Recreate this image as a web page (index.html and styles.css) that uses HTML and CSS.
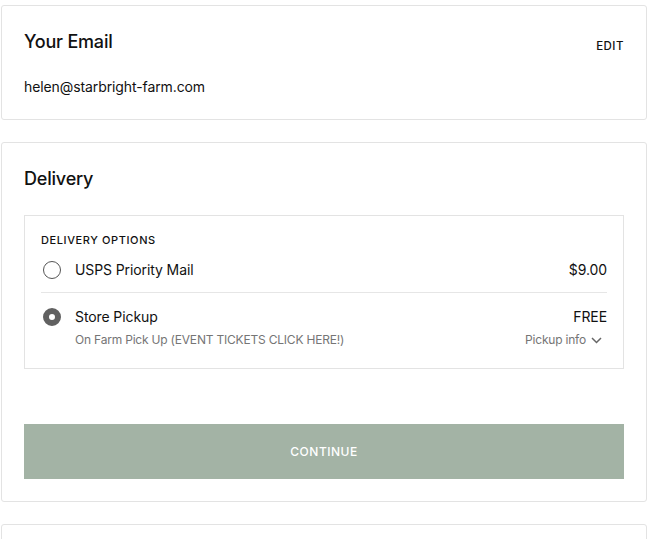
FILE: index.html
```
<!DOCTYPE html>
<html>
<head>
<meta charset="utf-8">
<link rel="stylesheet" href="styles.css">
</head>
<body>
<div class="page">
  <section class="card">
    <div class="card-head">
      <h2 class="title">Your Email</h2>
      <span class="edit">EDIT</span>
    </div>
    <p class="email">helen@starbright-farm.com</p>
  </section>

  <section class="card">
    <h2 class="title">Delivery</h2>
    <div class="options">
      <div class="options-label">DELIVERY OPTIONS</div>
      <div class="option first">
        <span class="radio"></span>
        <div class="option-body">
          <div class="option-row">
            <span class="option-name">USPS Priority Mail</span>
            <span class="option-price">$9.00</span>
          </div>
        </div>
      </div>
      <div class="option second">
        <span class="radio checked"></span>
        <div class="option-body">
          <div class="option-row">
            <span class="option-name">Store Pickup</span>
            <span class="option-price">FREE</span>
          </div>
          <div class="option-row sub">
            <span class="option-desc">On Farm Pick Up (EVENT TICKETS CLICK HERE!)</span>
            <span class="pickup-info">Pickup info
              <svg class="chev" width="11" height="7" viewBox="0 0 11 7"><path d="M1 1l4.5 4.5L10 1" fill="none" stroke="#666" stroke-width="1.5"/></svg>
            </span>
          </div>
        </div>
      </div>
    </div>
    <button class="continue">CONTINUE</button>
  </section>

  <section class="card stub"></section>
</div>
</body>
</html>
```
FILE: styles.css
```
* { box-sizing: border-box; }
html, body { margin: 0; padding: 0; background: #fff; }
body {
  font-family: Inter, "Liberation Sans", Arial, sans-serif;
  color: #111;
  width: 664px;
  height: 539px;
  overflow: hidden;
}
.page {
  padding: 5px 0 0 1px;
  width: 647px;
  display: flex;
  flex-direction: column;
  gap: 22px;
}
.card {
  border: 1px solid #e3e3e3;
  border-radius: 3px;
  padding: 24px 22px 22px;
  background: #fff;
}
.card-head {
  display: flex;
  justify-content: space-between;
  align-items: flex-end;
}
.title {
  margin: 0;
  font-size: 18px;
  line-height: 24px;
  font-weight: 500;
  letter-spacing: -0.2px;
  color: #111;
}
.edit {
  font-size: 11.5px;
  font-weight: 500;
  letter-spacing: 0.5px;
  line-height: 16px;
  color: #111;
}
.email {
  margin: 23px 0 0;
  font-size: 14px;
  line-height: 20px;
  letter-spacing: -0.1px;
  color: #111;
}
.options {
  margin-top: 24px;
  border: 1px solid #e3e3e3;
  padding: 16px 16px 20px;
}
.options-label {
  font-size: 11px;
  font-weight: 500;
  letter-spacing: 0.6px;
  line-height: 16px;
  color: #111;
}
.option {
  display: flex;
  align-items: flex-start;
  gap: 14px;
}
.option.first {
  padding: 12px 0 12px;
  border-bottom: 1px solid #e6e6e6;
}
.option.second {
  padding-top: 14px;
}
.radio {
  flex: none;
  width: 18px;
  height: 18px;
  margin: 1px 0 0 2px;
  border-radius: 50%;
  border: 1.2px solid #555;
}
.radio.checked {
  border: 6px solid #616161;
  background: #fff;
}
.option-body {
  flex: 1;
  display: flex;
  flex-direction: column;
  gap: 5px;
}
.option-row {
  display: flex;
  justify-content: space-between;
  align-items: center;
}
.option-name, .option-price {
  font-size: 14px;
  line-height: 20px;
  letter-spacing: -0.1px;
  color: #111;
}
.sub {
  font-size: 12px;
  line-height: 16px;
  letter-spacing: -0.2px;
  color: #757575;
}
.pickup-info {
  display: flex;
  align-items: center;
  gap: 5px;
  padding-right: 5px;
}
.chev { display: block; }
.continue {
  display: block;
  width: 100%;
  margin-top: 55px;
  height: 55px;
  border: none;
  background: #a3b3a5;
  color: #fff;
  font-family: Inter, "Liberation Sans", Arial, sans-serif;
  font-size: 12px;
  font-weight: 500;
  letter-spacing: 0.5px;
}
.stub {
  height: 40px;
  padding: 0;
}
```
